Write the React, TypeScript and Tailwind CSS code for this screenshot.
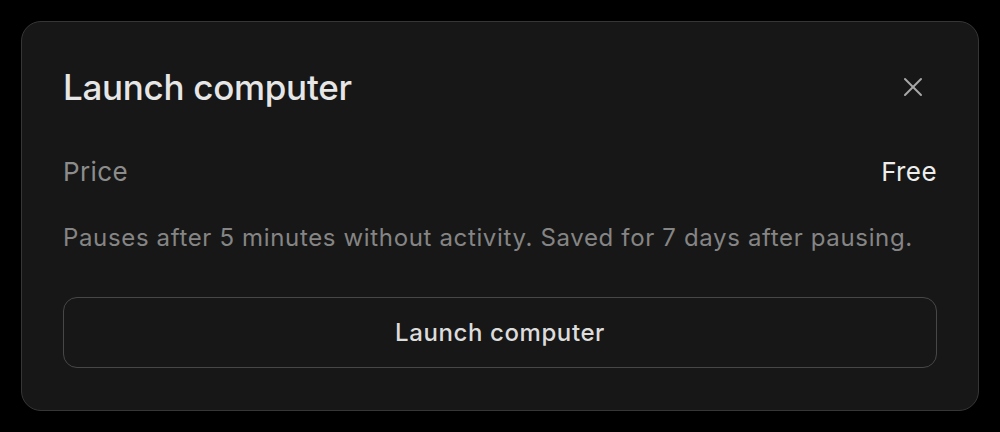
import { X } from "lucide-react";

export default function App() {
  return (
    <div
      className="w-[1000px] h-[432px] bg-black p-[21px] overflow-hidden"
      style={{ fontFamily: "Inter, 'Noto Sans', sans-serif" }}
    >
      <div className="h-[390px] rounded-[20px] border border-[#363636] bg-[#171717] px-[41px] pt-[40px]">
        <div className="flex items-center justify-between h-[50px]">
          <h2 className="text-[35px] leading-[50px] font-medium text-[#e6e6e6] tracking-[-0.3px]">
            Launch computer
          </h2>
          <X className="w-8 h-8 text-[#a8a8a8] mr-[8px]" strokeWidth={1.5} />
        </div>
        <div className="flex items-center justify-between mt-[42px] h-[36px] text-[26px] leading-[36px] tracking-[0.4px]">
          <span className="text-[#8c8c8c]">Price</span>
          <span className="text-[#ededed]">Free</span>
        </div>
        <p className="mt-[32px] text-[24px] leading-[32px] tracking-[0.65px] text-[#858585] whitespace-nowrap">
          Pauses after 5 minutes without activity. Saved for 7 days after pausing.
        </p>
        <button className="mt-[43px] w-full h-[71px] rounded-[14px] border-[1.5px] border-[#474747] text-[24px] font-medium tracking-[0.6px] text-[#dcdcdc]">
          Launch computer
        </button>
      </div>
    </div>
  );
}
